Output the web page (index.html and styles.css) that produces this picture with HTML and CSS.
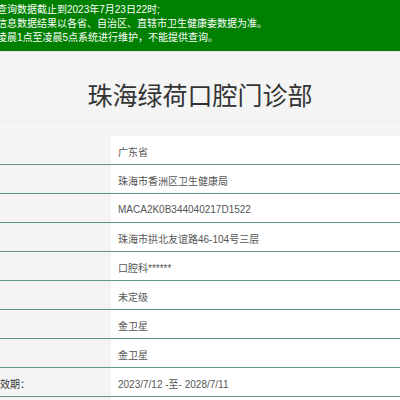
FILE: index.html
```html
<!DOCTYPE html>
<html lang="zh-CN">
<head>
<meta charset="utf-8">
<title>珠海绿荷口腔门诊部</title>
<link rel="stylesheet" href="styles.css">
</head>
<body>
<div class="banner">
  <div class="notice">
    <p>查询数据截止到2023年7月23日22时;</p>
    <p>信息数据结果以各省、自治区、直辖市卫生健康委数据为准。</p>
    <p>凌晨1点至凌晨5点系统进行维护，不能提供查询。</p>
  </div>
</div>
<h1 class="title">珠海绿荷口腔门诊部</h1>
<div class="info">
  <div class="row"><div class="label">省份：</div><div class="value">广东省</div></div>
  <div class="row"><div class="label">登记机关：</div><div class="value">珠海市香洲区卫生健康局</div></div>
  <div class="row"><div class="label">登记号：</div><div class="value">MACA2K0B344040217D1522</div></div>
  <div class="row"><div class="label">地址：</div><div class="value">珠海市拱北友谊路46-104号三层</div></div>
  <div class="row"><div class="label">诊疗科目：</div><div class="value">口腔科******</div></div>
  <div class="row"><div class="label">等级：</div><div class="value">未定级</div></div>
  <div class="row"><div class="label">法人：</div><div class="value">金卫星</div></div>
  <div class="row"><div class="label">负责人：</div><div class="value">金卫星</div></div>
  <div class="row"><div class="label">执业许可证有效期：</div><div class="value">2023/7/12 -至- 2028/7/11</div></div>
  <div class="row"><div class="label">发证：</div><div class="value">珠海市香洲区卫生健康局</div></div>
</div>
</body>
</html>
```
FILE: styles.css
```css
html, body {
  margin: 0;
  padding: 0;
}
body {
  background: #f4f4f4;
  font-family: "Liberation Sans", "Noto Sans CJK SC", sans-serif;
  overflow: hidden;
  width: 400px;
  height: 400px;
}
.banner {
  background: #008000;
  color: #fff;
  font-size: 10px;
  line-height: 14px;
  height: 52px;
  box-sizing: border-box;
  padding: 3px 0 7px;
  border-bottom: 1px solid #e6e6e6;
}
.notice {
  margin-left: -3px;
}
.notice p {
  margin: 0;
  white-space: nowrap;
}
.title {
  margin: 0;
  padding-top: 19px;
  height: 50px;
  line-height: 50px;
  font-size: 25px;
  font-weight: normal;
  color: #333;
  text-align: center;
  border-bottom: 1px solid #ececec;
}
.info {
  margin-top: 14px;
  margin-left: -90px;
  width: 490px;
}
.row {
  display: grid;
  grid-template-columns: 201px 1fr;
  height: 29px;
  box-sizing: border-box;
  border-bottom: 1px solid #5a9a76;
  font-size: 10px;
}
.label {
  display: flex;
  align-items: center;
  padding: 2px 0 0 30px;
  color: #333;
  white-space: nowrap;
}
.value {
  display: flex;
  align-items: center;
  padding: 2px 0 0 7px;
  background: #fff;
  color: #555;
  white-space: nowrap;
}
```
